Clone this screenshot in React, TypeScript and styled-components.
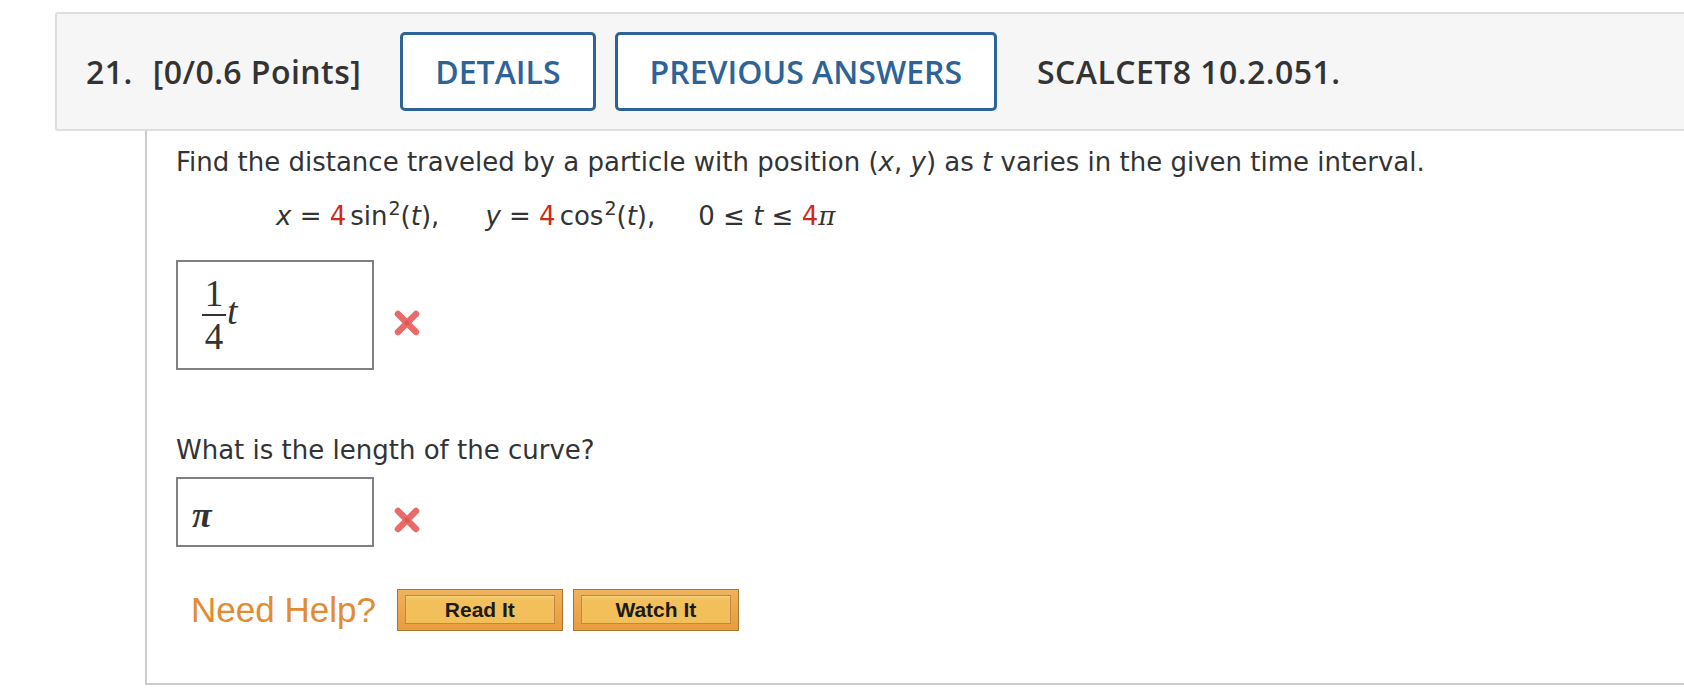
import React from 'react';
import styled, { createGlobalStyle } from 'styled-components';

const GlobalStyle = createGlobalStyle`
  html, body {
    margin: 0;
    padding: 0;
    background: #fff;
    overflow: hidden;
  }
`;

const Page = styled.div`
  padding: 12px 0 0 55px;
  height: 694px;
  box-sizing: border-box;
`;

const Header = styled.div`
  display: flex;
  align-items: center;
  height: 119px;
  box-sizing: border-box;
  padding-left: 29px;
  background: #f6f6f6;
  border: 2px solid #dedede;
  border-right: none;
  border-radius: 3px 0 0 3px;
  font-family: 'Open Sans', 'Liberation Sans', sans-serif;
  font-weight: 600;
  font-size: 32px;
  letter-spacing: 0.45px;
  color: #333;
`;

const Num = styled.span`
  margin-right: 20px;
`;

const Points = styled.span`
  margin-right: 39px;
`;

const TabButton = styled.button<{ $gap?: number }>`
  height: 79px;
  padding: 0 32px;
  margin-right: ${(p) => p.$gap ?? 19}px;
  background: #fff;
  border: 3px solid #2d6498;
  border-radius: 5px;
  color: #2d6498;
  font-family: inherit;
  font-weight: 600;
  font-size: 32px;
  letter-spacing: 0;
  cursor: pointer;
`;

const Body = styled.div`
  margin-left: 90px;
  height: 554px;
  box-sizing: border-box;
  padding: 13px 0 0 29px;
  border-left: 2px solid #cccccc;
  border-bottom: 2px solid #cccccc;
  font-family: 'DejaVu Sans', Verdana, sans-serif;
  font-size: 26px;
  line-height: 36px;
  color: #333;
`;

const Question = styled.div<{ $top?: number }>`
  margin-top: ${(p) => p.$top ?? 0}px;
`;

const Formula = styled.div`
  margin: 18px 0 0 100px;
  white-space: nowrap;
`;

const Var = styled.i`
  font-style: oblique;
`;

const Red = styled.span`
  color: #cc2b1e;
`;

const Sup = styled.sup`
  font-size: 19px;
  vertical-align: 10px;
  line-height: 0;
  margin-left: 1px;
`;

const Gap = styled.span<{ $w: number }>`
  display: inline-block;
  width: ${(p) => p.$w}px;
`;

const Pi = styled.span`
  font-family: 'DejaVu Serif', 'Liberation Serif', serif;
  font-style: italic;
`;

const AnswerRow = styled.div<{ $top: number }>`
  display: flex;
  align-items: center;
  margin-top: ${(p) => p.$top}px;
`;

const AnswerBox = styled.div<{ $h: number }>`
  width: 198px;
  height: ${(p) => p.$h}px;
  box-sizing: border-box;
  border: 2px solid #808080;
  display: flex;
  align-items: center;
  padding-left: 24px;
  font-family: 'Liberation Serif', 'DejaVu Serif', serif;
  color: #333;
`;

const Frac = styled.span`
  display: inline-flex;
  flex-direction: column;
  align-items: center;
  font-size: 37px;
  line-height: 32px;
`;

const FracBar = styled.span`
  display: block;
  width: 24px;
  height: 2px;
  margin: 4px 0 5px;
  background: #333;
`;

const MathT = styled.span`
  font-size: 38px;
  font-style: italic;
  margin: -8px 0 0 1px;
`;

const MathPi = styled.span`
  font-size: 36px;
  font-style: italic;
  font-weight: bold;
  margin: 6px 0 0 -10px;
`;

const WrongMark = styled.svg`
  width: 28px;
  height: 28px;
  margin: 16px 0 0 19px;
`;

const HelpRow = styled.div`
  display: flex;
  align-items: center;
  margin: 42px 0 0 15px;
`;

const HelpLabel = styled.span`
  font-family: 'Liberation Sans', Arial, sans-serif;
  font-size: 35px;
  color: #e38b30;
  margin-right: 21px;
`;

const HelpButton = styled.button`
  width: 166px;
  height: 42px;
  padding: 5px 7px 6px;
  margin-right: 10px;
  box-sizing: border-box;
  border: 1px solid #a87434;
  background: linear-gradient(#edb35c, #e89c3e);
  cursor: pointer;
  display: flex;
`;

const HelpInner = styled.span`
  flex: 1;
  display: flex;
  align-items: center;
  justify-content: center;
  border: 1px solid #c08844;
  background: linear-gradient(#f6cf7a 0, #f2c05c 4px, #f2bf5a 100%);
  font-family: 'Liberation Sans', Arial, sans-serif;
  font-weight: bold;
  font-size: 21px;
  color: #1c1a14;
`;

function Cross() {
  return (
    <WrongMark viewBox="0 0 28 28">
      <g stroke="#e85a5a" strokeWidth="6.5" strokeLinecap="round" opacity="0.9">
        <line x1="5" y1="5" x2="23" y2="23" />
        <line x1="23" y1="5" x2="5" y2="23" />
      </g>
      <circle cx="14" cy="14" r="2.5" fill="#d84444" opacity="0.55" />
    </WrongMark>
  );
}

export default function App() {
  return (
    <>
      <GlobalStyle />
      <Page>
        <Header>
          <Num>21.</Num>
          <Points>[0/0.6 Points]</Points>
          <TabButton>DETAILS</TabButton>
          <TabButton $gap={40}>PREVIOUS ANSWERS</TabButton>
          <span>SCALCET8 10.2.051.</span>
        </Header>
        <Body>
          <Question>
            Find the distance traveled by a particle with position (<Var>x</Var>, <Var>y</Var>) as{' '}
            <Var>t</Var> varies in the given time interval.
          </Question>
          <Formula>
            <Var>x</Var> = <Red>4</Red>
            <Gap $w={4} />sin<Sup>2</Sup>(<Var>t</Var>),
            <Gap $w={46} />
            <Var>y</Var> = <Red>4</Red>
            <Gap $w={4} />cos<Sup>2</Sup>(<Var>t</Var>),
            <Gap $w={43} />0 ≤ <Var>t</Var> ≤ <Red>4</Red>
            <Pi>π</Pi>
          </Formula>
          <AnswerRow $top={26}>
            <AnswerBox $h={110}>
              <Frac>
                <span>1</span>
                <FracBar />
                <span>4</span>
              </Frac>
              <MathT>t</MathT>
            </AnswerBox>
            <Cross />
          </AnswerRow>
          <Question $top={62}>What is the length of the curve?</Question>
          <AnswerRow $top={9}>
            <AnswerBox $h={70}>
              <MathPi>π</MathPi>
            </AnswerBox>
            <Cross />
          </AnswerRow>
          <HelpRow>
            <HelpLabel>Need Help?</HelpLabel>
            <HelpButton>
              <HelpInner>Read It</HelpInner>
            </HelpButton>
            <HelpButton>
              <HelpInner>Watch It</HelpInner>
            </HelpButton>
          </HelpRow>
        </Body>
      </Page>
    </>
  );
}
